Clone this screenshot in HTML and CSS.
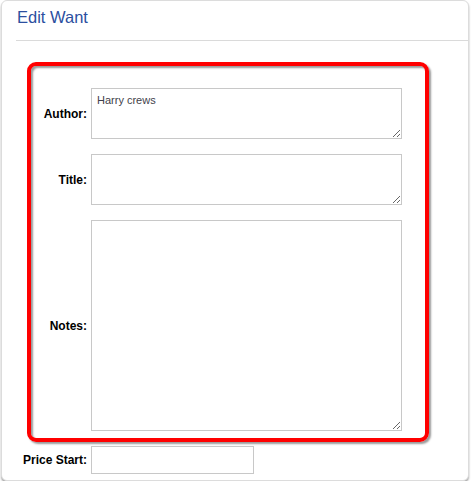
FILE: index.html
```html
<!DOCTYPE html>
<html lang="en">
<head>
  <meta charset="UTF-8" />
  <meta name="viewport" content="width=device-width, initial-scale=1.0"/>
  <title>Edit Want</title>
  <link rel="stylesheet" href="styles.css">
</head>
<body>
  <div class="panel">
    <div class="panel-heading">
      <h1>Edit Want</h1>
    </div>

    <form class="want-form">
      <label for="author">Author:</label>
      <textarea id="author" class="short">Harry crews</textarea>

      <label for="title">Title:</label>
      <textarea id="title" class="short"></textarea>

      <label for="notes">Notes:</label>
      <textarea id="notes" class="tall"></textarea>

      <label for="priceStart">Price Start:</label>
      <input type="text" id="priceStart" />
    </form>

    <!-- callout drawn over the author / title / notes fields -->
    <div class="callout"></div>
  </div>
</body>
</html>
```

FILE: styles.css
```css
body {
    font-family: "Liberation Sans", Arial, sans-serif;
    background-color: #fff;
    margin: 0;
}

.panel {
    position: relative;
    width: 466px;
    height: 479px;
    margin: 0 2px 0 1px;
    border: 1px solid #dcdcdc;
    border-radius: 6px;
    box-shadow: 0 2px 2px rgba(0, 0, 0, 0.35);
    background: white;
}

.panel-heading {
    margin-left: 14px;
    padding: 6px 0 13px 1px;
    border-bottom: 1px solid #dadada;
}

.panel-heading h1 {
    margin: 0;
    font-size: 16.5px;
    line-height: 20px;
    font-weight: normal;
    color: #2c4f9f;
}

.want-form {
    display: grid;
    grid-template-columns: 70px 311px;
    column-gap: 4px;
    row-gap: 15px;
    align-items: center;
    padding: 47px 0 0 15px;
}

.want-form label {
    text-align: right;
    font-size: 12px;
    font-weight: bold;
    color: #000;
}

textarea,
input[type="text"] {
    box-sizing: border-box;
    margin: 0;
    border: 1px solid #c8c8c8;
    font-family: "Liberation Sans", Arial, sans-serif;
    font-size: 11px;
    color: #3f3f4a;
}

textarea {
    width: 311px;
    padding: 5px 5px;
    resize: vertical;
}

textarea.short {
    height: 51px;
}

textarea.tall {
    height: 211px;
}

input[type="text"] {
    width: 163px;
    height: 28px;
    padding: 4px 5px;
}

.callout {
    position: absolute;
    left: 25px;
    top: 61px;
    width: 394px;
    height: 372px;
    border: 4px solid #ff0000;
    border-radius: 9px;
    box-shadow: 2px 2px 2px rgba(0, 0, 0, 0.4), inset 2px 2px 2px rgba(0, 0, 0, 0.4);
    pointer-events: none;
}
```
